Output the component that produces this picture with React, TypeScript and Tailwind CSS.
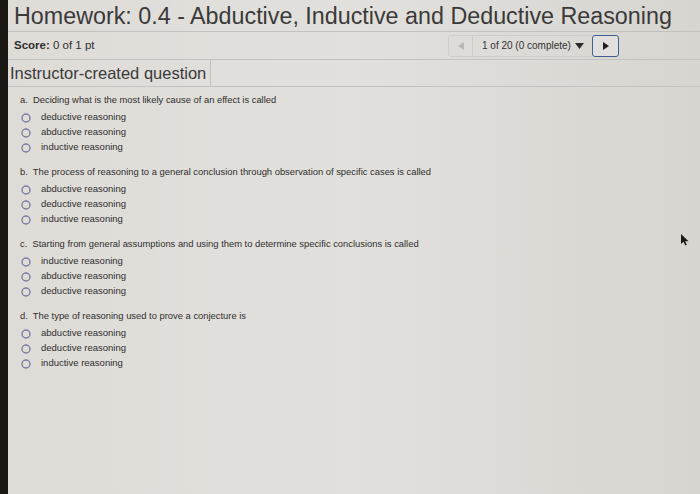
import React from "react";

const questions = [
  {
    q: "a.  Deciding what is the most likely cause of an effect is called",
    opts: ["deductive reasoning", "abductive reasoning", "inductive reasoning"],
  },
  {
    q: "b.  The process of reasoning to a general conclusion through observation of specific cases is called",
    opts: ["abductive reasoning", "deductive reasoning", "inductive reasoning"],
  },
  {
    q: "c.  Starting from general assumptions and using them to determine specific conclusions is called",
    opts: ["inductive reasoning", "abductive reasoning", "deductive reasoning"],
  },
  {
    q: "d.  The type of reasoning used to prove a conjecture is",
    opts: ["abductive reasoning", "deductive reasoning", "inductive reasoning"],
  },
];

function Radio() {
  return (
    <svg width="10" height="10" viewBox="0 0 10 10" className="shrink-0">
      <circle cx="5" cy="5" r="4" fill="none" stroke="#7c7fa3" strokeWidth="1.4" />
    </svg>
  );
}

export default function App() {
  return (
    <div
      className="relative flex h-[494px] w-[700px] overflow-hidden bg-[#1b1715]"
      style={{ fontFamily: '"Liberation Sans", Arial, sans-serif' }}
    >
      <div className="w-[8px] shrink-0" />
      <div className="flex-1 bg-[linear-gradient(90deg,#dfdcd8_0%,#e2e0dc_50%,#d6d5d0_100%)] text-[#333]">
        <div className="h-[32px] border-b border-[#c4c2c0] pl-[6px] text-[23.3px] leading-[32px] text-[#3a3a3a] whitespace-nowrap">
          Homework: 0.4 - Abductive, Inductive and Deductive Reasoning
        </div>
        <div className="flex h-[28px] items-center justify-between border-b border-[#c4c2c0] pl-[6px] pr-[81px]">
          <div className="text-[11.5px] text-[#2e2e2e]">
            <span className="font-bold">Score:</span> 0 of 1 pt
          </div>
          <div className="flex h-[22px] items-stretch">
            <div className="flex w-[25px] items-center justify-center rounded-l-[3px] border border-[#cfcdcb] bg-[#dedcd9]">
              <svg width="6" height="8" viewBox="0 0 6 8">
                <path d="M6 0 L0 4 L6 8 Z" fill="#b9b8b8" />
              </svg>
            </div>
            <div className="flex w-[119px] items-center gap-[3px] border-y border-[#cfcdcb] pl-[9px] text-[10px] text-[#333]">
              <span>1 of 20 (0 complete)</span>
              <svg width="9" height="6" viewBox="0 0 9 6" className="ml-[1px]">
                <path d="M0 0 L9 0 L4.5 6 Z" fill="#2a2a2a" />
              </svg>
            </div>
            <div className="flex w-[27px] items-center justify-center rounded-[3px] border-[1.5px] border-[#3f5f94] bg-[#e2e0de]">
              <svg width="6" height="8" viewBox="0 0 6 8">
                <path d="M0 0 L6 4 L0 8 Z" fill="#1e1e1e" />
              </svg>
            </div>
          </div>
        </div>
        <div className="flex h-[27px] border-b border-[#c4c2c0]">
          <div className="border-r border-[#c4c2c0] pl-[2px] pr-[4px] text-[16.5px] leading-[26px] text-[#3a3a3a]">
            Instructor-created question
          </div>
        </div>
        <div className="pl-[12px] pt-[7px]">
          {questions.map((item, i) => (
            <div key={i} className="mb-[11px]">
              <div className="h-[12px] whitespace-pre text-[9.4px] leading-[12px] text-[#2e2e2e]">{item.q}</div>
              <div className="mt-[4px]">
                {item.opts.map((o, j) => (
                  <div key={j} className="flex h-[15px] items-center gap-[10px] pl-[1px]">
                    <Radio />
                    <span className="text-[9.5px] text-[#2e2e2e]">{o}</span>
                  </div>
                ))}
              </div>
            </div>
          ))}
        </div>
      </div>
      <svg
        width="9"
        height="12"
        viewBox="0 0 9 12"
        className="absolute left-[681px] top-[234px]"
      >
        <path d="M0 0 L0 10 L2.5 7.8 L4.3 11.5 L5.8 10.8 L4.1 7.2 L7.5 7.2 Z" fill="#1a1a1a" />
      </svg>
    </div>
  );
}
